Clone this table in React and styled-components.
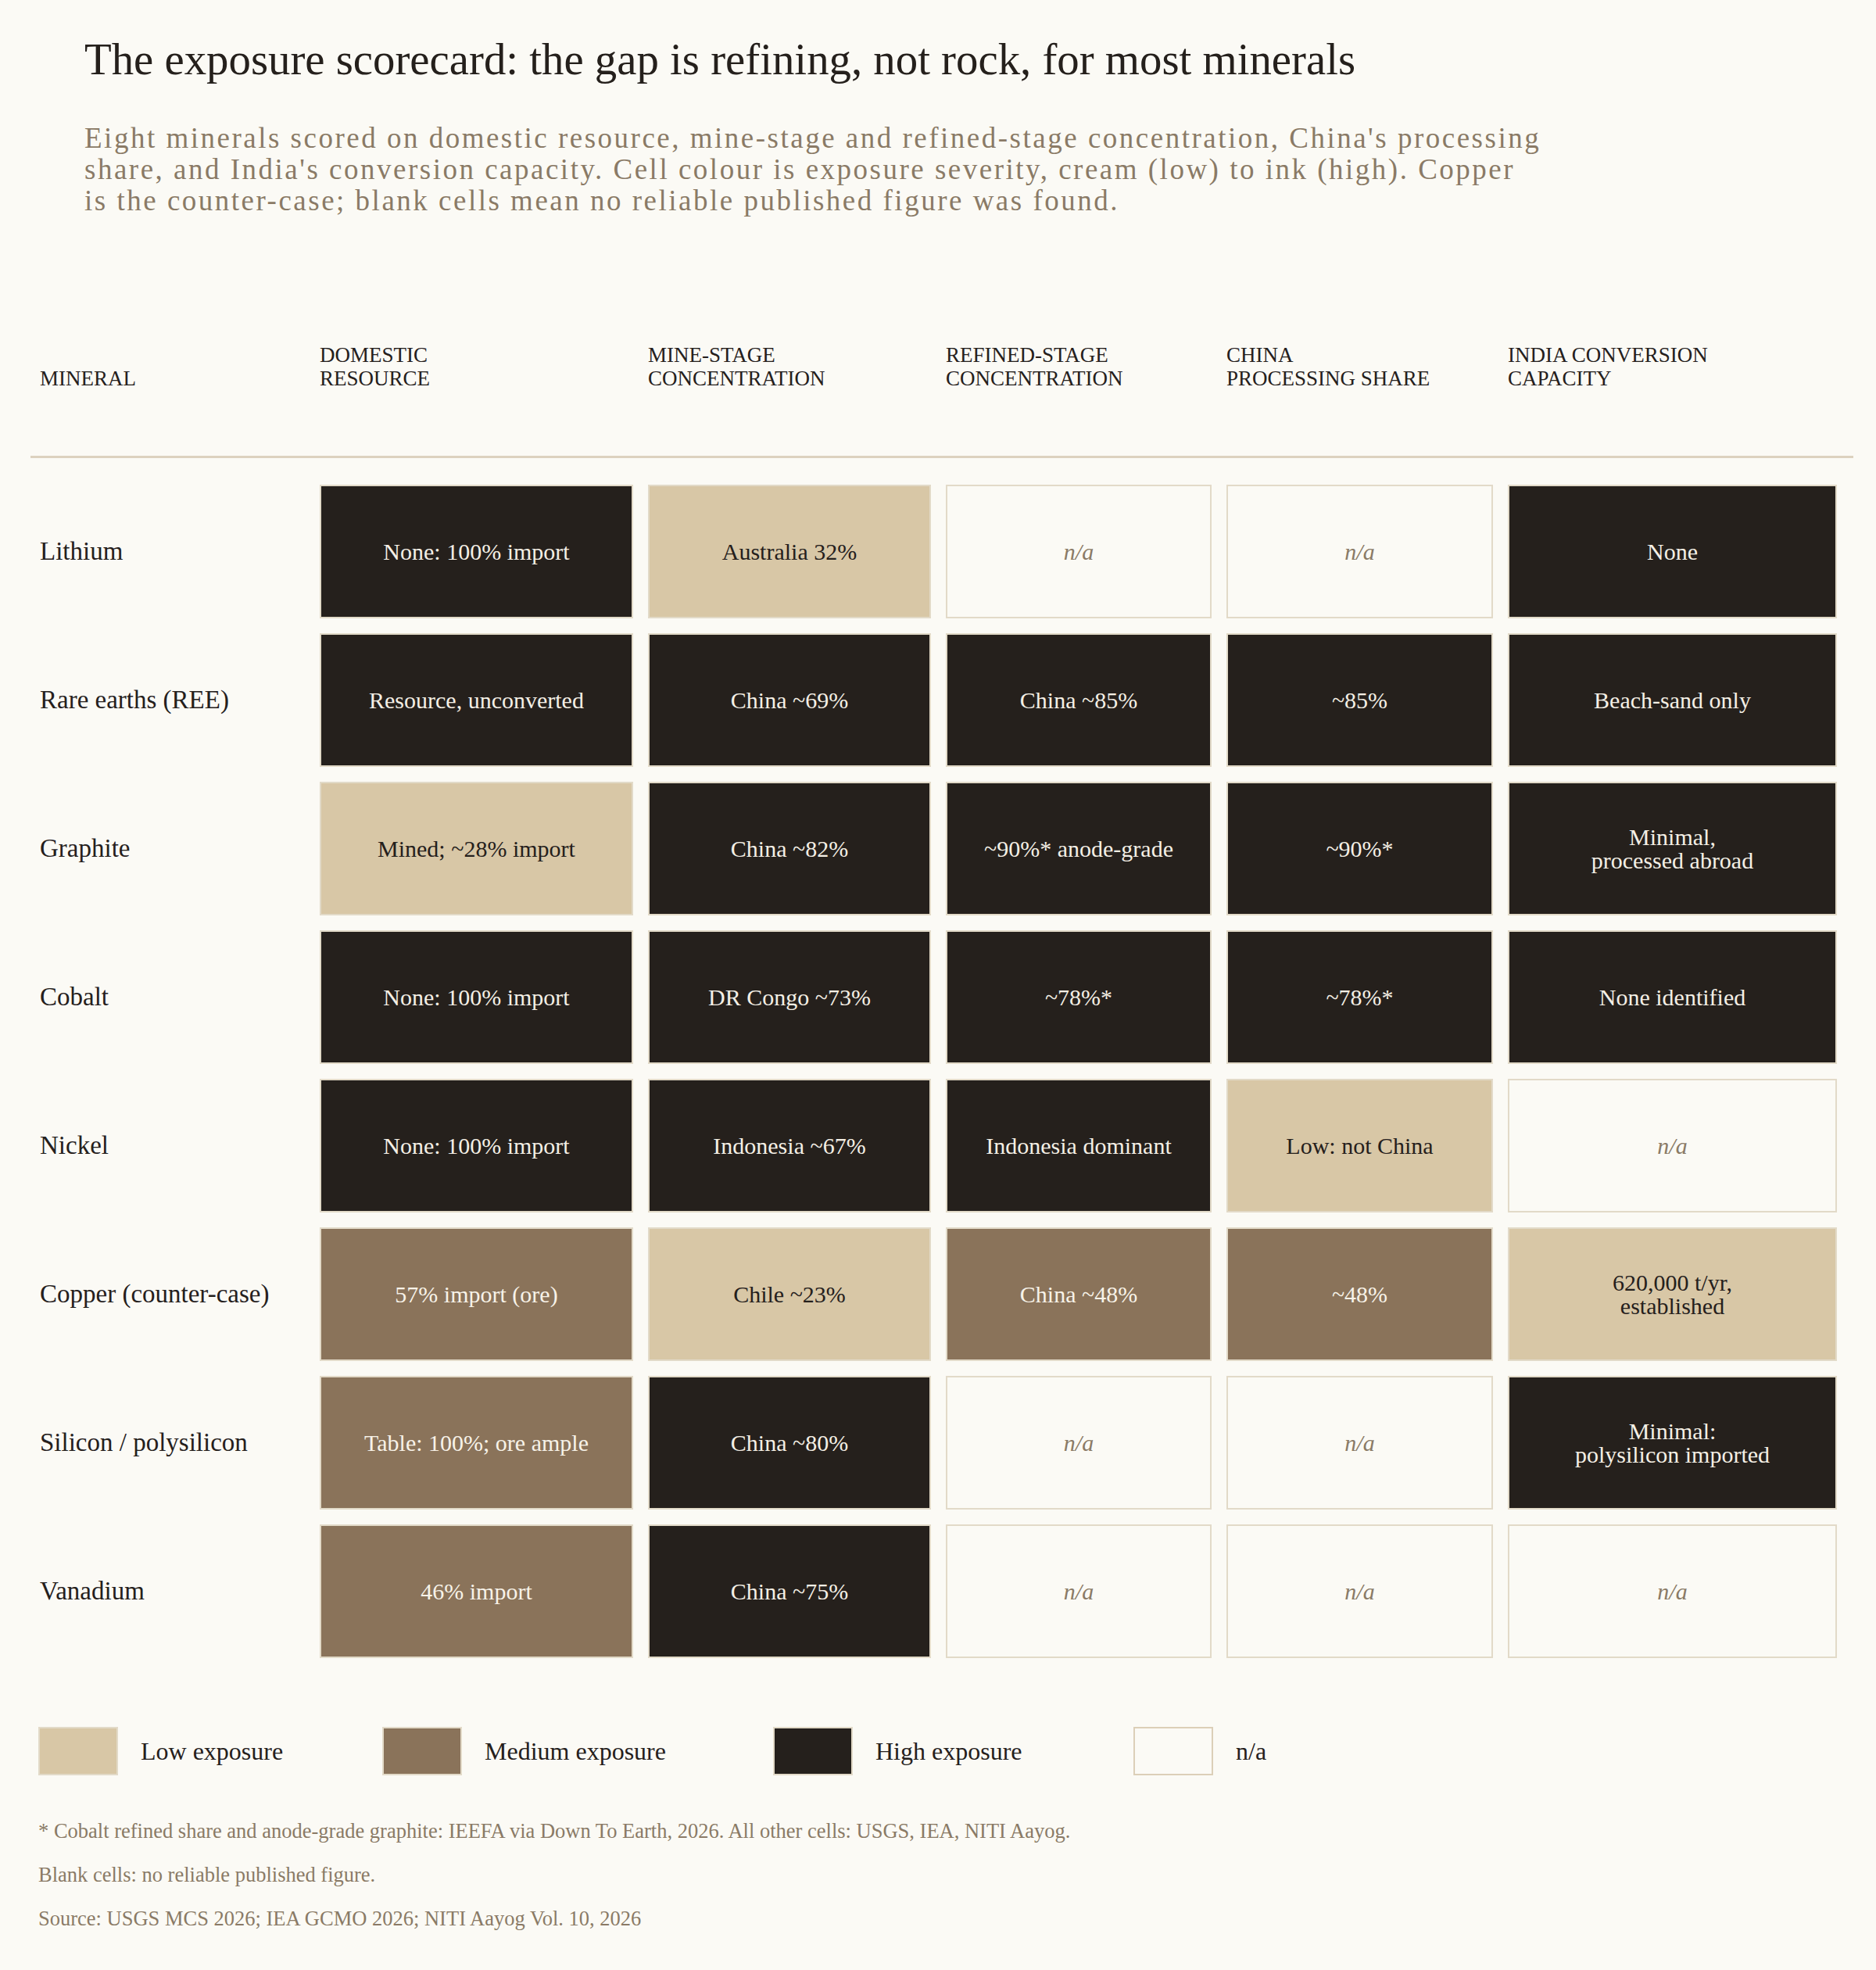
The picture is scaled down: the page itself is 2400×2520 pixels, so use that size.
import React from 'react';
import styled, { createGlobalStyle, css } from 'styled-components';

const INK = '#25201c';
const LOW = '#d8c7a6';
const MED = '#8a735a';
const BG = '#fbfaf5';
const EDGE = '#e2dac8';
const MUTED = '#8a7a66';
const SERIF = '"Liberation Serif", "Times New Roman", serif';
const COLS = '351px 401px 362px 340px 341px 421px';

const Global = createGlobalStyle`
  html, body { margin: 0; padding: 0; background: ${BG}; }
  body { font-family: ${SERIF}; color: ${INK}; }
  * { box-sizing: border-box; }
`;

const Page = styled.main`
  width: 2400px;
  min-height: 2520px;
  padding: 42px 29px 40px 39px;
  background: ${BG};
`;

const Intro = styled.header`
  padding-left: 69px;
`;

const Title = styled.h1`
  margin: 0;
  font-family: ${SERIF};
  font-weight: 400;
  font-size: 56.8px;
  line-height: 68px;
  color: ${INK};
`;

const Subtitle = styled.p`
  margin: 47px 0 0;
  font-size: 37px;
  letter-spacing: 2.5px;
  line-height: 40px;
  color: ${MUTED};
`;

const HeaderRow = styled.div`
  display: grid;
  grid-template-columns: ${COLS};
  column-gap: 19px;
  align-items: end;
  margin-top: 162px;
  height: 60px;
`;

const ColHead = styled.div`
  font-size: 27px;
  line-height: 30px;
  text-transform: uppercase;
  color: ${INK};
  padding-left: ${(p) => (p.$first ? '12px' : '0')};
`;

const Divider = styled.hr`
  margin: 84px 0 0;
  border: 0;
  height: 3px;
  background: #dcd2bf;
`;

const Body = styled.div`
  margin-top: 34px;
  display: flex;
  flex-direction: column;
  gap: 19px;
`;

const Row = styled.div`
  display: grid;
  grid-template-columns: ${COLS};
  column-gap: 19px;
  height: 171px;
`;

const Mineral = styled.div`
  display: flex;
  align-items: center;
  padding-left: 12px;
  font-size: 33px;
  color: ${INK};
`;

const fills = {
  high: css`background: ${INK}; color: #f4efe5;`,
  med: css`background: ${MED}; color: #f7f2e8;`,
  low: css`background: ${LOW}; color: ${INK};`,
  na: css`background: ${BG}; color: ${MUTED}; font-style: italic;`,
};

const Cell = styled.div`
  display: flex;
  align-items: center;
  justify-content: center;
  text-align: center;
  white-space: pre-line;
  border: 2px solid ${EDGE};
  font-size: 30px;
  line-height: 30px;
  ${(p) => fills[p.$level]}
`;

const Legend = styled.div`
  display: grid;
  grid-template-columns: 440px 500px 461px auto;
  margin: 88px 0 0 10px;
`;

const LegendItem = styled.div`
  display: flex;
  align-items: center;
  gap: 29px;
`;

const Swatch = styled.span`
  width: 102px;
  height: 62px;
  border: 2px solid ${(p) => (p.$level === 'na' ? '#dccfb8' : EDGE)};
  ${(p) => fills[p.$level]}
`;

const LegendLabel = styled.span`
  font-size: 32px;
  color: ${INK};
`;

const Notes = styled.div`
  margin: 43px 0 0 10px;
`;

const Note = styled.p`
  margin: 0;
  font-size: 26.5px;
  line-height: 56px;
  color: ${MUTED};
`;

const columns = [
  'Mineral',
  'Domestic\nresource',
  'Mine-stage\nconcentration',
  'Refined-stage\nconcentration',
  'China\nprocessing share',
  'India conversion\ncapacity',
];

const NA = ['na', 'n/a'];

const rows = [
  ['Lithium', [['high', 'None: 100% import'], ['low', 'Australia 32%'], NA, NA, ['high', 'None']]],
  ['Rare earths (REE)', [['high', 'Resource, unconverted'], ['high', 'China ~69%'], ['high', 'China ~85%'], ['high', '~85%'], ['high', 'Beach-sand only']]],
  ['Graphite', [['low', 'Mined; ~28% import'], ['high', 'China ~82%'], ['high', '~90%* anode-grade'], ['high', '~90%*'], ['high', 'Minimal,\nprocessed abroad']]],
  ['Cobalt', [['high', 'None: 100% import'], ['high', 'DR Congo ~73%'], ['high', '~78%*'], ['high', '~78%*'], ['high', 'None identified']]],
  ['Nickel', [['high', 'None: 100% import'], ['high', 'Indonesia ~67%'], ['high', 'Indonesia dominant'], ['low', 'Low: not China'], NA]],
  ['Copper (counter-case)', [['med', '57% import (ore)'], ['low', 'Chile ~23%'], ['med', 'China ~48%'], ['med', '~48%'], ['low', '620,000 t/yr,\nestablished']]],
  ['Silicon / polysilicon', [['med', 'Table: 100%; ore ample'], ['high', 'China ~80%'], NA, NA, ['high', 'Minimal:\npolysilicon imported']]],
  ['Vanadium', [['med', '46% import'], ['high', 'China ~75%'], NA, NA, NA]],
];

const legend = [
  ['low', 'Low exposure'],
  ['med', 'Medium exposure'],
  ['high', 'High exposure'],
  ['na', 'n/a'],
];

const ColHeadText = ({ text, first }) => (
  <ColHead $first={first}>
    {text.split('\n').map((l, i) => (
      <div key={i}>{l}</div>
    ))}
  </ColHead>
);

export default function App() {
  return (
    <>
      <Global />
      <Page>
        <Intro>
          <Title>The exposure scorecard: the gap is refining, not rock, for most minerals</Title>
          <Subtitle>
            Eight minerals scored on domestic resource, mine-stage and refined-stage concentration, China's processing
            <br />
            share, and India's conversion capacity. Cell colour is exposure severity, cream (low) to ink (high). Copper
            <br />
            is the counter-case; blank cells mean no reliable published figure was found.
          </Subtitle>
        </Intro>

        <HeaderRow>
          {columns.map((c, i) => (
            <ColHeadText key={c} text={c} first={i === 0} />
          ))}
        </HeaderRow>
        <Divider />

        <Body>
          {rows.map(([name, cells]) => (
            <Row key={name}>
              <Mineral>{name}</Mineral>
              {cells.map(([level, text], i) => (
                <Cell key={i} $level={level}>
                  {text}
                </Cell>
              ))}
            </Row>
          ))}
        </Body>

        <Legend>
          {legend.map(([level, label]) => (
            <LegendItem key={level}>
              <Swatch $level={level} />
              <LegendLabel>{label}</LegendLabel>
            </LegendItem>
          ))}
        </Legend>

        <Notes>
          <Note>* Cobalt refined share and anode-grade graphite: IEEFA via Down To Earth, 2026. All other cells: USGS, IEA, NITI Aayog.</Note>
          <Note>Blank cells: no reliable published figure.</Note>
          <Note>Source: USGS MCS 2026; IEA GCMO 2026; NITI Aayog Vol. 10, 2026</Note>
        </Notes>
      </Page>
    </>
  );
}
